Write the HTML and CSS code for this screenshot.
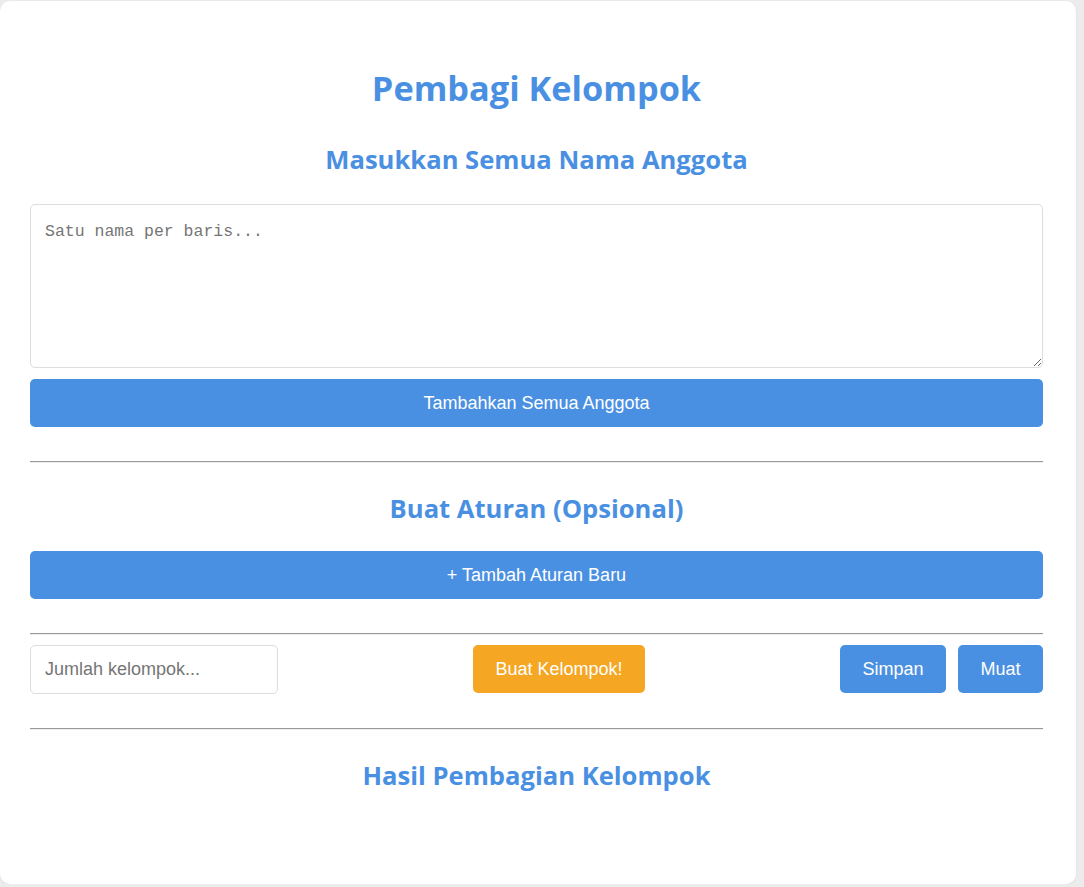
FILE: index.html
```html
<!DOCTYPE html>
<html lang="id">
<head>
<meta charset="utf-8">
<title>Pembagi Kelompok</title>
<link rel="stylesheet" href="styles.css">
</head>
<body>
<main class="card">
  <h1 class="title">Pembagi Kelompok</h1>
  <h2 class="section-title first">Masukkan Semua Nama Anggota</h2>
  <textarea class="names" placeholder="Satu nama per baris..."></textarea>
  <button class="btn btn-full btn-add">Tambahkan Semua Anggota</button>
  <hr class="sep sep-1">
  <h2 class="section-title rules">Buat Aturan (Opsional)</h2>
  <button class="btn btn-full btn-rule">+ Tambah Aturan Baru</button>
  <hr class="sep sep-2">
  <div class="controls">
    <input class="count" type="text" placeholder="Jumlah kelompok...">
    <button class="btn btn-orange">Buat Kelompok!</button>
    <div class="save-load">
      <button class="btn btn-small">Simpan</button>
      <button class="btn btn-small">Muat</button>
    </div>
  </div>
  <hr class="sep sep-3">
  <h2 class="section-title result">Hasil Pembagian Kelompok</h2>
</main>
</body>
</html>
```

FILE: styles.css
```css
html, body {
  margin: 0;
  padding: 0;
}
body {
  background: #ececec;
  padding-top: 1px;
  font-family: "Liberation Sans", Arial, sans-serif;
}
.card {
  width: 1076px;
  height: 883px;
  box-sizing: border-box;
  background: #ffffff;
  border-radius: 10px;
  padding: 65px 33px 0 30px;
  box-shadow: 0 1px 3px rgba(0,0,0,0.06);
}
.title,
.section-title {
  font-family: "Open Sans", "Noto Sans", sans-serif;
  font-weight: 700;
  color: #4a90e2;
  text-align: center;
  margin: 0;
}
.title {
  font-size: 34.3px;
  line-height: 44px;
}
.section-title {
  font-size: 25.6px;
  line-height: 34px;
}
.section-title.first { margin-top: 33px; }
.section-title.rules { margin-top: 29px; }
.section-title.result { margin-top: 29px; }
.names {
  display: block;
  box-sizing: border-box;
  width: 100%;
  height: 164px;
  margin-top: 27px;
  padding: 17px 14px 14px;
  border: 1px solid #dddddd;
  border-radius: 5px;
  font-family: "Liberation Mono", "DejaVu Sans Mono", monospace;
  font-size: 16.5px;
  color: #333;
  resize: vertical;
}
.names::placeholder { color: #757575; }
.btn {
  box-sizing: border-box;
  height: 48px;
  border: none;
  border-radius: 5px;
  background: #4a90e2;
  color: #ffffff;
  font-family: "Liberation Sans", Arial, sans-serif;
  font-size: 18px;
  cursor: pointer;
}
.btn-full {
  display: block;
  width: 100%;
}
.btn-add { margin-top: 11px; }
.btn-rule { margin-top: 25px; }
.sep {
  border: none;
  border-top: 1px solid #999999;
  border-bottom: 1px solid #eeeeee;
  margin: 0;
}
.sep-1 { margin-top: 34px; }
.sep-2 { margin-top: 34px; }
.sep-3 { margin-top: 34px; }
.controls {
  display: flex;
  justify-content: space-between;
  align-items: flex-start;
  margin-top: 10px;
}
.count {
  box-sizing: border-box;
  width: 248px;
  height: 49px;
  padding: 0 14px;
  border: 1px solid #dddddd;
  border-radius: 5px;
  font-family: "Liberation Sans", Arial, sans-serif;
  font-size: 18px;
}
.count::placeholder { color: #757575; }
.btn-orange {
  background: #f5a623;
  padding: 0 22px;
}
.save-load {
  display: flex;
  gap: 12px;
}
.btn-small {
  padding: 0 22.5px;
}
```
